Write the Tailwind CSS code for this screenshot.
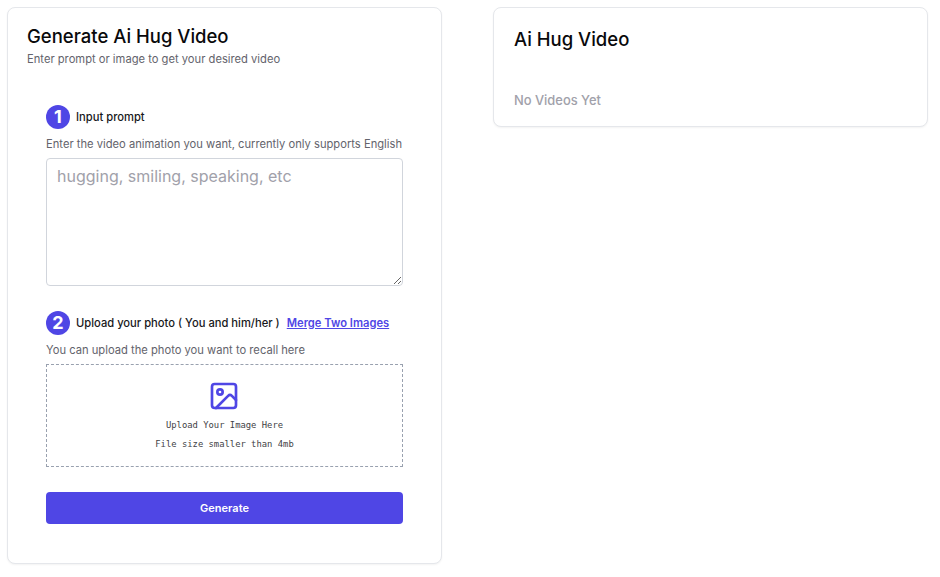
<!DOCTYPE html>
<html lang="en">
<head>
<meta charset="utf-8">
<script src="https://cdn.jsdelivr.net/npm/@tailwindcss/browser@4"></script>
<title>Ai Hug Video</title>
</head>
<body class="bg-white font-['Inter',sans-serif] overflow-hidden">
<div class="w-[940px] h-[577px] flex items-start gap-[51px] pl-[7px] pt-[7px]">
  <section class="w-[435px] h-[557px] shrink-0 rounded-lg border border-gray-200 shadow-xs bg-white pl-[19px] pt-[15px]">
    <h2 class="text-[18.5px] leading-[26px] font-medium text-[#09090b]">Generate Ai Hug Video</h2>
    <p class="text-[11.2px] leading-[16px] mt-[2px] text-[#63636c]">Enter prompt or image to get your desired video</p>
    <div class="ml-[19px] w-[357px] mt-[38px]">
      <div class="flex items-center gap-[6px] h-[24px]">
        <span class="w-[24px] h-[24px] rounded-full bg-[#4f46e5] text-white text-lg font-bold flex items-center justify-center">1</span>
        <span class="text-[11.2px] font-medium text-[#18181b]">Input prompt</span>
      </div>
      <p class="text-[11.2px] leading-[16px] mt-[7px] whitespace-nowrap text-[#63636c]">Enter the video animation you want, currently only supports English</p>
      <textarea class="block w-[357px] h-[128px] mt-[6px] rounded border border-gray-300 px-[10px] py-[5px] text-base leading-6 text-gray-700 placeholder:text-[#a1a1aa] outline-none" placeholder="hugging, smiling, speaking, etc"></textarea>
      <div class="flex items-center gap-[7px] h-[24px] mt-[25px]">
        <span class="w-[24px] h-[24px] rounded-full bg-[#4f46e5] text-white text-lg font-bold flex items-center justify-center mr-[-1px]">2</span>
        <span class="text-[11.2px] font-medium text-[#18181b]">Upload your photo ( You and him/her )</span>
        <a href="#" class="text-[11.2px] font-semibold text-[#4f46e5] underline">Merge Two Images</a>
      </div>
      <p class="text-[11.2px] leading-[16px] mt-[7px] text-[#63636c]">You can upload the photo you want to recall here</p>
      <div class="mt-[6px] h-[103px] border border-dashed border-gray-400 flex flex-col items-center pt-[15px]">
        <svg class="w-[32px] h-[32px] text-[#4f46e5] ml-[-1px]" viewBox="0 0 24 24" fill="none" stroke="currentColor" stroke-width="2" stroke-linecap="round" stroke-linejoin="round"><rect x="3" y="3" width="18" height="18" rx="2"/><circle cx="9" cy="9" r="2"/><path d="m21 15-3.086-3.086a2 2 0 0 0-2.828 0L6 21"/></svg>
        <p class="font-['DejaVu_Sans_Mono',monospace] text-[8.85px] leading-[12px] mt-[7px] text-[#3f3f46]">Upload Your Image Here</p>
        <p class="font-['DejaVu_Sans_Mono',monospace] text-[8.85px] leading-[12px] mt-[7px] text-[#3f3f46]">File size smaller than 4mb</p>
      </div>
      <button class="block w-[357px] h-[32px] mt-[25px] rounded bg-[#4f46e5] text-white text-[11px] font-semibold">Generate</button>
    </div>
  </section>
  <section class="w-[435px] h-[120px] shrink-0 rounded-lg border border-gray-200 shadow-xs bg-white pl-[20px] pt-[18px]">
    <h2 class="text-[18.5px] leading-[26px] font-medium text-[#09090b]">Ai Hug Video</h2>
    <p class="text-[12.9px] leading-4 mt-[41px] font-medium text-[#a1a1aa]">No Videos Yet</p>
  </section>
</div>
</body>
</html>
